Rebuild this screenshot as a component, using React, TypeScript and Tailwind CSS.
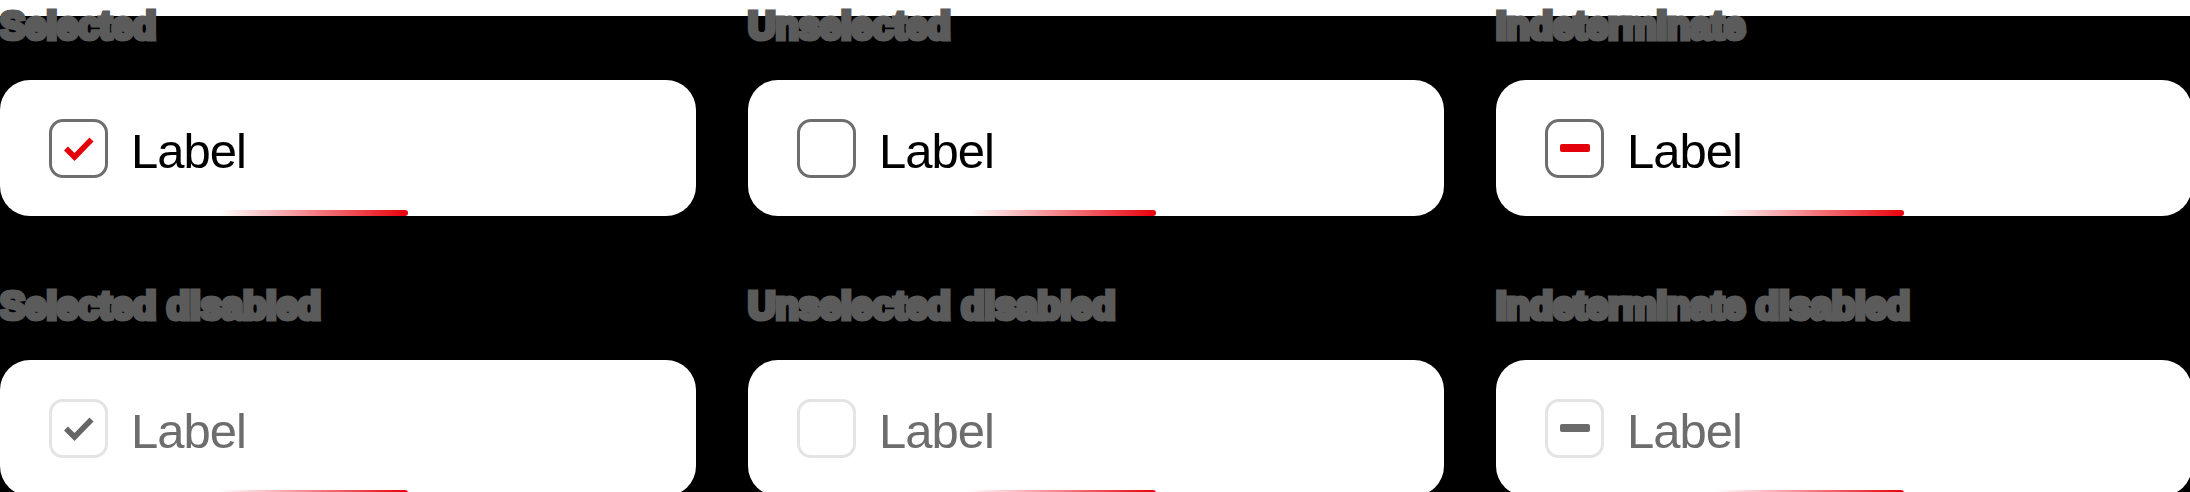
import type { ReactNode } from 'react';

type CheckState = 'checked' | 'unchecked' | 'indeterminate';

interface Variant {
  title: string;
  state: CheckState;
  disabled: boolean;
}

const variants: Variant[] = [
  { title: 'Selected', state: 'checked', disabled: false },
  { title: 'Unselected', state: 'unchecked', disabled: false },
  { title: 'Indeterminate', state: 'indeterminate', disabled: false },
  { title: 'Selected disabled', state: 'checked', disabled: true },
  { title: 'Unselected disabled', state: 'unchecked', disabled: true },
  { title: 'Indeterminate disabled', state: 'indeterminate', disabled: true },
];

function CheckMark({ disabled }: { disabled: boolean }) {
  return (
    <svg viewBox="0 0 53 53" className="w-[53px] h-[53px]">
      <polyline
        points="14,26.5 22.5,35 39.5,17.5"
        fill="none"
        stroke={disabled ? '#666666' : '#e3000b'}
        strokeWidth="5.6"
        strokeLinecap="butt"
        strokeLinejoin="miter"
      />
    </svg>
  );
}

function Box({ state, disabled }: { state: CheckState; disabled: boolean }) {
  let inner: ReactNode = null;
  if (state === 'checked') inner = <CheckMark disabled={disabled} />;
  if (state === 'indeterminate')
    inner = (
      <span
        className={
          disabled
            ? 'w-[30px] h-[8px] rounded-[2px] bg-[#6b6b6b]'
            : 'w-[30px] h-[8px] rounded-[2px] bg-[#e3000b]'
        }
      />
    );

  return (
    <div
      className={
        disabled
          ? 'w-[59px] h-[59px] shrink-0 rounded-[14px] border-[3px] border-[#e4e4e4] bg-white flex items-center justify-center'
          : 'w-[59px] h-[59px] shrink-0 rounded-[14px] border-[3px] border-[#6e6e6e] bg-white flex items-center justify-center'
      }
    >
      {inner}
    </div>
  );
}

function CheckboxCard({ title, state, disabled }: Variant) {
  return (
    <div className="flex flex-col">
      {/* heading */}
      <h3 className="h-[38px] leading-[38px] text-[38px] font-bold text-[#5b5b5b] whitespace-nowrap font-['Liberation_Sans',Arial,sans-serif] [-webkit-text-stroke:5px_#5b5b5b]">
        {title}
      </h3>

      <div className="relative mt-[35px] h-[136px] rounded-[30px] bg-white flex items-center gap-[23px] pl-[49px] overflow-hidden">
        <Box state={state} disabled={disabled} />
        <span
          className={
            disabled
              ? "pt-[6px] text-[49px] leading-[49px] tracking-[-0.02em] text-[#6d6d6d] font-['Liberation_Sans',Arial,sans-serif]"
              : "pt-[6px] text-[49px] leading-[49px] tracking-[-0.02em] text-black font-['Liberation_Sans',Arial,sans-serif]"
          }
        >
          Label
        </span>

        {/* accent bar */}
        <div className="absolute left-[220px] bottom-0 w-[188px] h-[6px] rounded-r-full bg-linear-to-r from-[#e8000b]/0 to-[#e8000b]" />
      </div>
    </div>
  );
}

export default function App() {
  return (
    <div className="w-[2190px] h-[492px] overflow-hidden pt-[7px] bg-[linear-gradient(#ffffff_0_16px,#000000_16px)]">
      <div className="grid grid-cols-[696px_696px_696px] gap-x-[52px] gap-y-[71px]">
        {variants.map((v) => (
          <CheckboxCard key={v.title} {...v} />
        ))}
      </div>
    </div>
  );
}
